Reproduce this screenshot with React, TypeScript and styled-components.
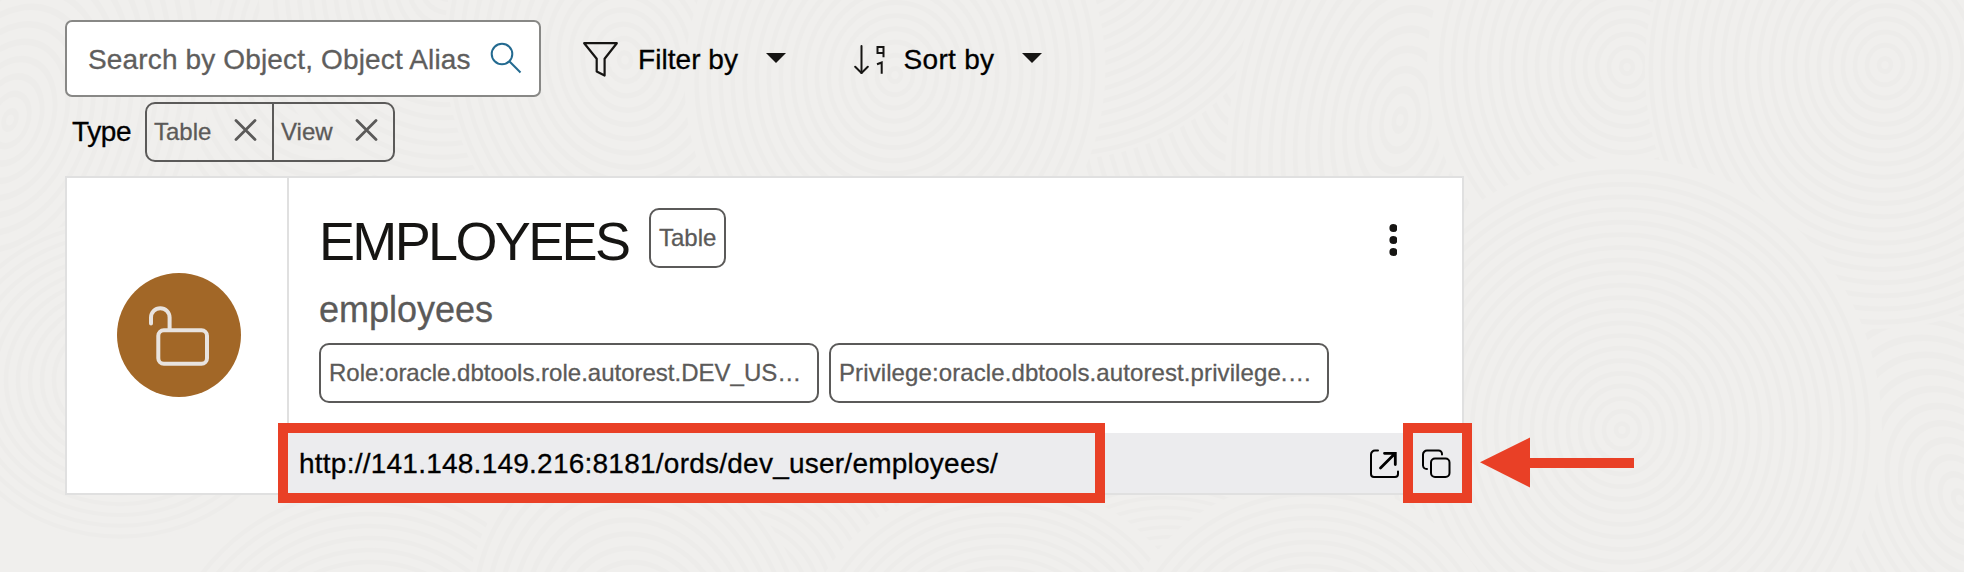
import React from "react";
import styled, { createGlobalStyle } from "styled-components";

const GlobalStyle = createGlobalStyle`
  body { margin: 0; }
  * { box-sizing: border-box; }
`;

const RED = "#e94026";

const Page = styled.main`
  position: relative;
  width: 1964px;
  height: 572px;
  overflow: hidden;
  background: #f0efed;
  font-family: "Liberation Sans", Arial, sans-serif;
  color: #161513;
`;

const Texture = styled.svg`
  position: absolute;
  inset: 0;
  display: block;
`;

const Content = styled.div`
  position: relative;
  display: flex;
  flex-direction: column;
  padding: 20px 0 0 65px;
`;

const Text = styled.span<{ $size: number; $color?: string; $spacing?: number }>`
  font-size: ${(p) => p.$size}px;
  line-height: ${(p) => Math.round(p.$size * 1.2)}px;
  color: ${(p) => p.$color ?? "#161513"};
  letter-spacing: ${(p) => p.$spacing ?? 0}px;
  white-space: nowrap;
  -webkit-text-stroke: 0.3px currentColor;
`;

const Icon = styled.svg`
  display: block;
  flex: none;
`;

const Toolbar = styled.div`
  display: flex;
  align-items: center;
  height: 77px;
`;

const SearchBox = styled.div`
  display: flex;
  align-items: center;
  justify-content: space-between;
  width: 476px;
  height: 77px;
  padding: 2px 17px 0 21px;
  border: 2px solid #888886;
  border-radius: 7px;
  background: #fff;
`;

const MenuButton = styled.button<{ $left: number; $gap: number }>`
  display: flex;
  align-items: center;
  gap: ${(p) => p.$gap}px;
  margin: 0 0 0 ${(p) => p.$left}px;
  padding: 2px 0 0;
  border: 0;
  background: none;
  font-family: inherit;
`;

const Caret = styled.span<{ $left: number }>`
  width: 0;
  height: 0;
  margin: -4px 0 0 ${(p) => p.$left}px;
  border-left: 10px solid transparent;
  border-right: 10px solid transparent;
  border-top: 10px solid #161513;
`;

const FilterRow = styled.div`
  display: flex;
  align-items: center;
  height: 60px;
  margin-top: 5px;
`;

const FilterLabel = styled.div`
  width: 80px;
  padding-left: 7px;
`;

const ChipGroup = styled.div`
  display: flex;
  height: 60px;
  border: 2px solid #5b5a59;
  border-radius: 10px;
`;

const FilterChip = styled.div<{ $width: number }>`
  display: flex;
  align-items: center;
  justify-content: space-between;
  width: ${(p) => p.$width}px;
  padding: 0 15px 2px 7px;
  & + & {
    border-left: 2px solid #5b5a59;
  }
`;

const Card = styled.section`
  position: relative;
  display: flex;
  width: 1399px;
  height: 319px;
  margin-top: 14px;
  border: 2px solid #e0e0e0;
  background: #fff;
`;

const StatusCell = styled.div`
  display: flex;
  align-items: center;
  flex: none;
  width: 220px;
  padding: 0 0 2px 50px;
`;

const StatusDisc = styled.div`
  width: 124px;
  height: 124px;
  border-radius: 50%;
  background: #a26727;
`;

const Main = styled.div`
  display: flex;
  flex-direction: column;
  flex: 1;
`;

const Details = styled.div`
  display: flex;
  justify-content: space-between;
  height: 255px;
  padding: 30px 65px 0 30px;
  border-left: 2px solid #e0e0e0;
`;

const Info = styled.div`
  display: flex;
  flex-direction: column;
`;

const TitleRow = styled.div`
  display: flex;
  align-items: center;
  gap: 20px;
  height: 60px;
`;

const Title = styled.h1`
  width: 310px;
  margin: 5px 0 0;
  font-size: 54px;
  font-weight: 400;
  line-height: 60px;
  letter-spacing: -2.65px;
  white-space: nowrap;
`;

const Alias = styled.div`
  display: flex;
  align-items: center;
  height: 75px;
  padding-top: 8px;
`;

const BadgeRow = styled.div`
  display: flex;
  gap: 10px;
`;

const Badge = styled.div<{ $width: number }>`
  display: flex;
  align-items: center;
  width: ${(p) => p.$width}px;
  height: 60px;
  padding: 0 0 2px 8px;
  border: 2px solid #5b5a59;
  border-radius: 10px;
`;

const UrlBar = styled.div`
  display: flex;
  align-items: center;
  height: 60px;
  padding: 1px 10px 0 12px;
  background: #ececee;
`;

const UrlActions = styled.div`
  display: flex;
  align-items: center;
  gap: 22px;
  margin-left: auto;
`;

/* Call-out frames drawn over the card */
const Highlight = styled.div<{ $x: number; $y: number; $w: number; $h: number }>`
  position: absolute;
  left: ${(p) => p.$x}px;
  top: ${(p) => p.$y}px;
  width: ${(p) => p.$w}px;
  height: ${(p) => p.$h}px;
  border: 10px solid ${RED};
`;

const Arrow = styled.svg`
  position: absolute;
  left: 1413px;
  top: 259px;
`;

/* x, y, outer radius, vertical stretch, rotation */
const swirls: [number, number, number, number, number][] = [
  [330, 40, 290, 1.2, 10], [1240, 80, 320, 1.5, 0], [1780, 560, 300, 1.1, 20],
  [730, 600, 260, 0.9, 0], [1180, 620, 260, 0.8, 15], [10, 120, 190, 1.5, 20],
  [450, -20, 190, 1.1, 15], [1960, 500, 190, 1.5, -25], [1060, -80, 240, 1, 10],
  [625, 60, 180, 1.2, -10], [895, 75, 210, 1.1, 8], [1400, 120, 170, 1.7, 10],
  [1627, 67, 200, 1.1, 0], [1885, 65, 240, 1.1, 5], [1622, 430, 260, 1.05, 0],
  [120, 380, 180, 0.9, 0], [370, 700, 220, 1, 20], [640, 640, 170, 1.2, -20],
  [1000, 660, 200, 0.9, 0], [1310, 680, 200, 1, 20],
];

const Background = () => (
  <Texture width="1964" height="572">
    {swirls.map(([x, y, r, s, a], i) => (
      <g
        key={i}
        transform={`translate(${x} ${y}) rotate(${a}) scale(1 ${s})`}
        fill="none"
        stroke="#edecea"
        strokeWidth="4.5"
      >
        <circle r={r} fill="#f0efed" stroke="none" />
        {Array.from({ length: Math.floor(r / 12) }, (_, n) => (
          <circle key={n} r={6 + n * 12} />
        ))}
      </g>
    ))}
  </Texture>
);

const CloseIcon = () => (
  <Icon width="24" height="24" viewBox="0 0 24 24" stroke="#5b5a59" strokeWidth="2.8" strokeLinecap="round">
    <path d="M3 1.500 22 20.500M22 1.500 3 20.500" />
  </Icon>
);

export default function App() {
  return (
    <Page>
      <GlobalStyle />
      <Background />
      <Content>
        <Toolbar>
          <SearchBox>
            <Text $size={28} $color="#5f5e5d" $spacing={0.15}>Search by Object, Object Alias</Text>
            <Icon width="32" height="36" viewBox="0 0 32 36" fill="none" stroke="#236a90" strokeWidth="2">
              <circle cx="12" cy="12" r="10.3" />
              <path d="M19.3 19.3 30.5 30.5" />
            </Icon>
          </SearchBox>
          <MenuButton $left={42} $gap={20}>
            <Icon width="35" height="36" viewBox="0 0 35 36" fill="none" stroke="#161513" strokeWidth="2.2" strokeLinejoin="round">
              <path d="M1.2 1.2H33.8L21.6 16.8V33.6L13.7 29.5V16.8Z" />
            </Icon>
            <Text $size={28} $color="#000" $spacing={0.05}>Filter by</Text>
            <Caret $left={7.500} />
          </MenuButton>
          <MenuButton $left={68} $gap={19}>
            <Icon width="31" height="30" viewBox="0 0 31 30" fill="none" stroke="#161513" strokeWidth="2">
              <path d="M7.5 1V28" strokeLinecap="round" />
              <path d="M1.2 21.8 7.5 28 13.8 21.8" strokeLinecap="round" strokeLinejoin="round" />
              <path d="M29.5 12.2V2H23.5V8H29.5" />
              <path d="M23 19.3 27.7 17.5V28.8" />
            </Icon>
            <Text $size={28} $color="#000" $spacing={0.3}>Sort by</Text>
            <Caret $left={9} />
          </MenuButton>
        </Toolbar>

        <FilterRow>
          <FilterLabel>
            <Text $size={28} $color="#000" $spacing={-0.4}>Type</Text>
          </FilterLabel>
          <ChipGroup>
            <FilterChip $width={125}>
              <Text $size={24} $color="#5b5a59">Table</Text>
              <CloseIcon />
            </FilterChip>
            <FilterChip $width={121}>
              <Text $size={24} $color="#5b5a59">View</Text>
              <CloseIcon />
            </FilterChip>
          </ChipGroup>
        </FilterRow>

        <Card>
          <StatusCell>
            <StatusDisc>
              <Icon width="124" height="124" viewBox="0 0 124 124" fill="none" stroke="#e8e3df" strokeWidth="4" strokeLinecap="round">
                <path d="M34 50.5V44.5A9.3 9.3 0 0 1 52.6 44.5V57" />
                <rect x="41.3" y="57.3" width="48.7" height="33.5" rx="5.5" />
              </Icon>
            </StatusDisc>
          </StatusCell>
          <Main>
            <Details>
              <Info>
                <TitleRow>
                  <Title>EMPLOYEES</Title>
                  <Badge $width={77}>
                    <Text $size={24} $color="#5b5a59">Table</Text>
                  </Badge>
                </TitleRow>
                <Alias>
                  <Text $size={36} $color="#5b5a59">employees</Text>
                </Alias>
                <BadgeRow>
                  <Badge $width={500}>
                    <Text $size={24} $color="#5b5a59">Role:oracle.dbtools.role.autorest.DEV_US…</Text>
                  </Badge>
                  <Badge $width={500}>
                    <Text $size={24} $color="#5b5a59" $spacing={0.1}>Privilege:oracle.dbtools.autorest.privilege.…</Text>
                  </Badge>
                </BadgeRow>
              </Info>
              <Icon width="8" height="64" viewBox="0 0 8 64" fill="#161513">
                <circle cx="4.400" cy="20" r="4" />
                <circle cx="4.400" cy="32" r="4" />
                <circle cx="4.400" cy="44" r="4" />
              </Icon>
            </Details>
            <UrlBar>
              <Text $size={28} $color="#000" $spacing={0.24}>http://141.148.149.216:8181/ords/dev_user/employees/</Text>
              <UrlActions>
                <Icon width="30" height="30" viewBox="0 0 30 30" fill="none" stroke="#000" strokeWidth="2" strokeLinecap="round">
                  <path d="M8 1.500H5A4 4 0 0 0 1 5.500V25A3 3 0 0 0 4 28H25A3 3 0 0 0 28 25V22.5" />
                  <path d="M10.5 19 25 4.5M14.5 4.3H25.3V15.5" strokeWidth="2.8" />
                </Icon>
                <Icon width="30" height="30" viewBox="0 0 30 30" fill="none" stroke="#000" strokeWidth="2" strokeLinecap="round">
                  <path d="M20 5.5V5A3.5 3.5 0 0 0 16.500 1.500H5A4 4 0 0 0 1 5.500V16.500A4 4 0 0 0 5 20" />
                  <rect x="9" y="9.500" width="18.500" height="18.500" rx="4" />
                </Icon>
              </UrlActions>
            </UrlBar>
          </Main>
          <Highlight $x={211} $y={245} $w={827} $h={80} />
          <Highlight $x={1336} $y={245} $w={69} $h={80} />
          <Arrow width="155" height="52" viewBox="0 0 155 52" fill={RED}>
            <path d="M0 25.300 50 0.500V21H154V31H50V50.500Z" />
          </Arrow>
        </Card>
      </Content>
    </Page>
  );
}
